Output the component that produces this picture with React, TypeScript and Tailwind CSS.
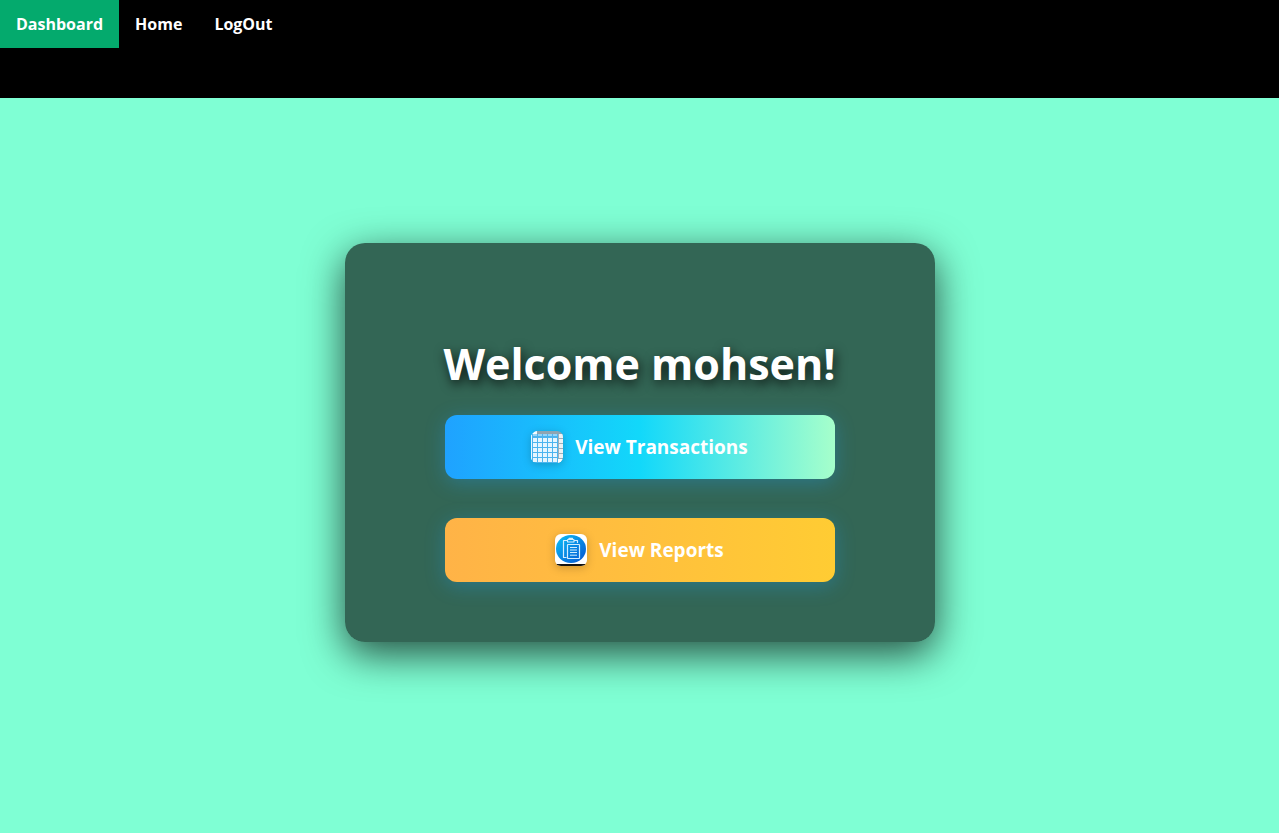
import React from "react";

const navLinks = [
  { label: "Dashboard", active: true },
  { label: "Home", active: false },
  { label: "LogOut", active: false },
];

function CalendarIcon() {
  const cells = [0, 1, 2, 3, 4];
  return (
    <svg viewBox="0 0 32 32" className="size-8 rounded-md drop-shadow-[0_2px_4px_rgba(0,0,0,0.2)]" aria-hidden="true">
      <path d="M0 4 4 0h2v3H1v26l2 3-3-3z" fill="#f5fbff" />
      <path d="M6 0h23l3 3v1h-5v-1H6z" fill="#8fa5b2" />
      <path d="M1 3h26v29H3l-2-3z" fill="#4cb4ef" />
      <path d="M2 4h4M7 4h4M12 4h4M17 4h4M22 4h4" stroke="#dff3ff" strokeWidth="1" />
      <path d="M27 3h5v26l-3 3h-2z" fill="#9fafba" />
      {cells.map((row) =>
        cells.map((col) => (
          <rect key={`${row}-${col}`} x={2 + col * 5} y={7 + row * 5} width="4" height="4" fill="#e6f6ff" />
        )),
      )}
      {cells.map((row) => (
        <rect key={row} x="28" y={3 + row * 5} width="4" height="4" fill="#edf2f5" />
      ))}
      <path d="M27 28h5v1l-3 3h-2z" fill="#fff" />
      <path d="M.5 4v25" stroke="#e4f5ff" />
    </svg>
  );
}

function ReportIcon() {
  return (
    <svg viewBox="0 0 32 32" className="size-8 rounded-md drop-shadow-[0_2px_4px_rgba(0,0,0,0.2)]" aria-hidden="true">
      <defs>
        <linearGradient id="report-disc" x1="0" y1="0" x2="1" y2="1">
          <stop offset="0.05" stopColor="#0bbcf5" />
          <stop offset="0.5" stopColor="#0889e4" />
          <stop offset="1" stopColor="#0753d0" />
        </linearGradient>
      </defs>
      <rect width="32" height="32" fill="#fff" />
      <rect y="30" width="32" height="2" fill="#141414" />
      <ellipse cx="16" cy="15" rx="15" ry="14" fill="url(#report-disc)" />
      <g fill="none" stroke="#d3edff" strokeWidth="1.2" strokeLinejoin="round">
        <path d="M11.500 23.500H8.500V6.500H12M19 6.500h3.500V9" />
        <rect x="12.500" y="5.500" width="6.500" height="2.500" rx="0.6" />
        <path d="M14 5.300V4.300h3.500v1" />
        <rect x="12.500" y="10.500" width="12" height="14" rx="0.5" />
        <path d="M15 13.500h7M15 16h7M15 18.500h7M15 21.200h7" strokeWidth="1" />
      </g>
    </svg>
  );
}

const buttonClass =
  "flex h-16 w-full cursor-pointer items-center justify-center gap-3 rounded-xl bg-linear-to-r/srgb text-[19px] font-bold text-white shadow-[0_4px_20px_rgba(31,162,255,0.3)]";

export default function App() {
  return (
    <div className="flex min-h-screen flex-col bg-[#7fffd4] font-['Open_Sans','Noto_Sans',sans-serif]">
      <nav className="flex h-[98px] items-start bg-black">
        {navLinks.map(({ label, active }) => (
          <a
            key={label}
            href="#"
            className={`flex h-12 items-center px-4 text-base font-bold text-white ${active ? "bg-[#04aa6d]" : ""}`}
          >
            {label}
          </a>
        ))}
      </nav>
      <main className="flex flex-1 items-center justify-center pb-[46px]">
        <section className="flex w-[590px] max-w-full flex-col rounded-[20px] bg-black/60 px-[100px] pt-[91px] pb-[60px] shadow-[0_12px_40px_rgba(0,0,0,0.7)]">
          <h1 className="mb-[21px] self-center text-[43px] leading-[60px] font-bold whitespace-nowrap text-white [text-shadow:2px_4px_12px_rgba(0,0,0,0.8)]">
            Welcome mohsen!
          </h1>
          <div className="flex flex-col gap-[39px]">
            <button type="button" className={`${buttonClass} from-[#1fa2ff] via-[#12d8fa] to-[#a6ffcb]`}>
              <CalendarIcon />
              View Transactions
            </button>
            <button type="button" className={`${buttonClass} from-[#ffb347] to-[#ffcc33]`}>
              <ReportIcon />
              View Reports
            </button>
          </div>
        </section>
      </main>
    </div>
  );
}
